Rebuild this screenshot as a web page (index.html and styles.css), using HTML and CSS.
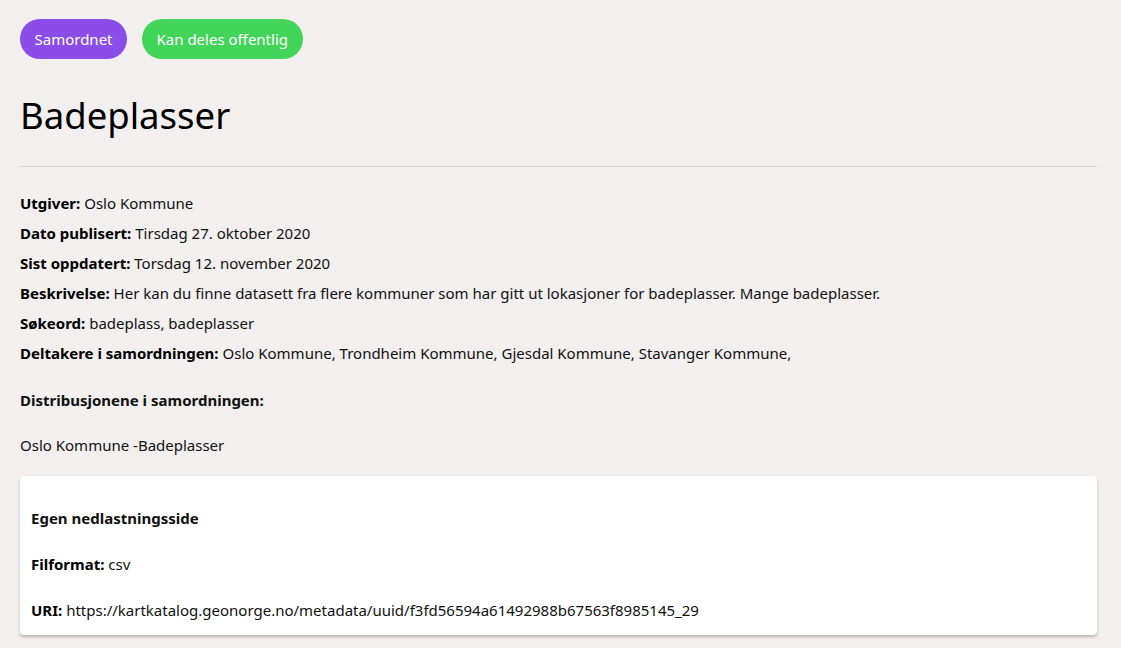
FILE: index.html
```html
<!DOCTYPE html>
<html lang="no">
<head>
<meta charset="utf-8">
<title>Badeplasser</title>
<link rel="stylesheet" href="styles.css">
</head>
<body>
<main class="page">
  <div class="tags">
    <span class="tag tag-purple">Samordnet</span>
    <span class="tag tag-green">Kan deles offentlig</span>
  </div>
  <h1 class="title">Badeplasser</h1>
  <hr class="divider">
  <div class="meta">
    <div class="row"><b>Utgiver:</b> Oslo Kommune</div>
    <div class="row"><b>Dato publisert:</b> Tirsdag 27. oktober 2020</div>
    <div class="row"><b>Sist oppdatert:</b> Torsdag 12. november 2020</div>
    <div class="row"><b>Beskrivelse:</b> Her kan du finne datasett fra flere kommuner som har gitt ut lokasjoner for badeplasser. Mange badeplasser.</div>
    <div class="row"><b>Søkeord:</b> badeplass, badeplasser</div>
    <div class="row"><b>Deltakere i samordningen:</b> Oslo Kommune, Trondheim Kommune, Gjesdal Kommune, Stavanger Kommune,</div>
  </div>
  <h3 class="section">Distribusjonene i samordningen:</h3>
  <p class="dist-name">Oslo Kommune -Badeplasser</p>
  <div class="card">
    <h4 class="card-title">Egen nedlastningsside</h4>
    <p class="card-row"><b>Filformat:</b> csv</p>
    <p class="card-row"><b>URI:</b> https://kartkatalog.geonorge.no/metadata/uuid/f3fd56594a61492988b67563f8985145_29</p>
  </div>
</main>
</body>
</html>
```
FILE: styles.css
```css
html, body {
  margin: 0;
  padding: 0;
}
body {
  background: #f3efee;
  color: #111;
  font-family: "Noto Sans", "Open Sans", sans-serif;
  font-size: 15px;
}
.page {
  padding: 19px 24px 20px 20px;
}
.tags {
  display: flex;
  gap: 15px;
}
.tag {
  display: inline-flex;
  align-items: center;
  height: 40px;
  padding: 0 14.5px;
  border-radius: 20px;
  color: #fff;
  font-size: 15px;
}
.tag-purple { background: #8a4de8; }
.tag-green { background: #43d45a; }
.title {
  margin: 32px 0 0;
  font-weight: 400;
  font-size: 36.5px;
  line-height: 48px;
  color: #000;
}
.divider {
  margin: 27px 0 21px;
  border: 0;
  border-top: 1px solid #d6d2d1;
}
.row {
  line-height: 30px;
}
b { font-weight: 700; color: #000; }
.section {
  margin: 17px 0 0;
  font-size: 15px;
  font-weight: 700;
  line-height: 30px;
}
.dist-name {
  margin: 15px 0 0;
  line-height: 30px;
}
.card {
  margin-top: 16px;
  background: #fff;
  border-radius: 4px;
  box-shadow: 0 2px 3px rgba(0,0,0,0.25);
  padding: 27px 11px 10px;
}
.card-title {
  margin: 0;
  font-size: 15px;
  font-weight: 700;
  line-height: 30px;
}
.card-row {
  margin: 16px 0 0;
  line-height: 30px;
}
```
